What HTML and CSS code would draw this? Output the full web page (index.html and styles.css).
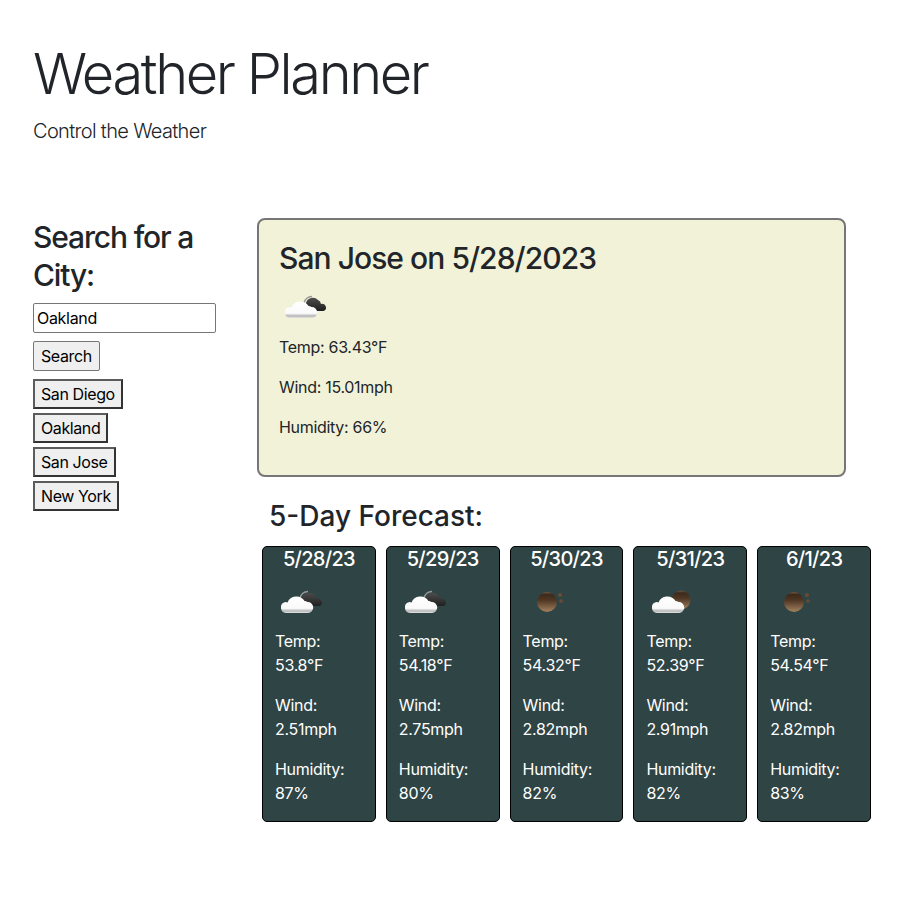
FILE: index.html
```html
<!DOCTYPE html>
<html lang="en">

<head>
    <meta charset="utf-8">
    <title>Weather Planner</title>
    <link rel="stylesheet" href="styles.css">
</head>

<body>
    <svg class="defs" width="0" height="0">
        <defs>
            <linearGradient id="cloudWhite" x1="0" y1="0" x2="0" y2="1">
                <stop offset="0" stop-color="#fff" />
                <stop offset="0.72" stop-color="#fafafa" />
                <stop offset="0.88" stop-color="#b5b5b5" />
                <stop offset="1" stop-color="#e6e6e6" />
            </linearGradient>
            <linearGradient id="cloudDark" x1="0" y1="0" x2="0" y2="1">
                <stop offset="0" stop-color="#4d4d4d" />
                <stop offset="1" stop-color="#1f1f1f" />
            </linearGradient>
            <linearGradient id="moon" x1="0" y1="0" x2="0" y2="1">
                <stop offset="0" stop-color="#7a5a40" />
                <stop offset="0.12" stop-color="#3d2a1c" />
                <stop offset="0.4" stop-color="#4e3623" />
                <stop offset="1" stop-color="#a3825f" />
            </linearGradient>
            <symbol id="clouds" viewBox="0 0 50 50">
                <path d="M23 22a8 8 0 0 1 8-6.500" fill="none" stroke="#999" stroke-width="1.500" />
                <path d="M29 30a5 5 0 0 1-4-8 7 7 0 0 1 12-3 5 5 0 0 1 3 4 3.700 3.700 0 0 1 2.500 7z" fill="url(#cloudDark)" />
                <path d="M9 37a5.500 5.500 0 0 1-.5-10.900c1 0 1.500.2 2 .4a9.500 9.500 0 0 1 17-1.500 6 6 0 0 1 3 1 5.500 5.500 0 0 1 .5 11z" fill="url(#cloudWhite)" />
            </symbol>
            <symbol id="clear" viewBox="0 0 50 50">
                <circle cx="22" cy="26" r="10" fill="url(#moon)" />
                <circle cx="35" cy="19" r="2" fill="#6a4c35" />
                <circle cx="36" cy="25" r="1.800" fill="#6a4c35" />
            </symbol>
            <symbol id="partly" viewBox="0 0 50 50">
                <circle cx="33" cy="24" r="9.500" fill="url(#moon)" />
                <path d="M9 37a5.500 5.500 0 0 1-.5-10.900c1 0 1.500.2 2 .4a9.500 9.500 0 0 1 17-1.500 6 6 0 0 1 3 1 5.500 5.500 0 0 1 .5 11z" fill="url(#cloudWhite)" />
            </symbol>
        </defs>
    </svg>

    <header class="hero">
        <h1>Weather Planner</h1>
        <p>Control the Weather</p>
    </header>

    <main class="layout">
        <aside class="sidebar">
            <h2>Search for a City:</h2>
            <input type="text" class="city-input" value="Oakland">
            <button class="search-btn">Search</button>
            <div class="history">
                <button>San Diego</button>
                <button>Oakland</button>
                <button>San Jose</button>
                <button>New York</button>
            </div>
        </aside>

        <section class="results">
            <div class="today">
                <h2>San Jose on 5/28/2023</h2>
                <svg class="icon"><use href="#clouds" /></svg>
                <p>Temp: 63.43°F</p>
                <p>Wind: 15.01mph</p>
                <p>Humidity: 66%</p>
            </div>

            <h3 class="forecast-title">5-Day Forecast:</h3>
            <div class="forecast">
                <div class="day">
                    <h4>5/28/23</h4>
                    <svg class="icon"><use href="#clouds" /></svg>
                    <p>Temp:<br>53.8°F</p>
                    <p>Wind:<br>2.51mph</p>
                    <p>Humidity:<br>87%</p>
                </div>
                <div class="day">
                    <h4>5/29/23</h4>
                    <svg class="icon"><use href="#clouds" /></svg>
                    <p>Temp:<br>54.18°F</p>
                    <p>Wind:<br>2.75mph</p>
                    <p>Humidity:<br>80%</p>
                </div>
                <div class="day">
                    <h4>5/30/23</h4>
                    <svg class="icon"><use href="#clear" /></svg>
                    <p>Temp:<br>54.32°F</p>
                    <p>Wind:<br>2.82mph</p>
                    <p>Humidity:<br>82%</p>
                </div>
                <div class="day">
                    <h4>5/31/23</h4>
                    <svg class="icon"><use href="#partly" /></svg>
                    <p>Temp:<br>52.39°F</p>
                    <p>Wind:<br>2.91mph</p>
                    <p>Humidity:<br>82%</p>
                </div>
                <div class="day">
                    <h4>6/1/23</h4>
                    <svg class="icon"><use href="#clear" /></svg>
                    <p>Temp:<br>54.54°F</p>
                    <p>Wind:<br>2.82mph</p>
                    <p>Humidity:<br>83%</p>
                </div>
            </div>
        </section>
    </main>
</body>

</html>
```

FILE: styles.css
```css
body {
    font-family: Inter, "Liberation Sans", sans-serif;
    font-size: 16px;
    line-height: 24px;
    letter-spacing: -0.3px;
    margin: 0;
    color: #212529;
    background-color: #fff;
}

.defs {
    display: block;
    height: 0;
}

h1,
h2,
h3,
h4,
p {
    margin: 0;
}

.hero {
    padding: 41px 33px 0;
    height: 177px;
    box-sizing: border-box;
}

.hero h1 {
    font-size: 56px;
    font-weight: 300;
    line-height: 67px;
    letter-spacing: -2.4px;
}

.hero p {
    font-size: 20px;
    font-weight: 300;
    line-height: 30px;
    letter-spacing: -0.66px;
    margin-top: 8px;
}

.layout {
    display: flex;
    padding: 41px 0 0 33px;
}

.sidebar {
    width: 183px;
    margin-right: 41px;
    flex-shrink: 0;
}

.sidebar h2 {
    font-size: 30px;
    font-weight: 500;
    line-height: 38px;
    letter-spacing: -1.15px;
    margin-bottom: 9px;
}

.city-input {
    display: block;
    width: 100%;
    height: 30px;
    box-sizing: border-box;
    padding: 0 3px;
    font: 16px Inter, "Liberation Sans", sans-serif;
    letter-spacing: -0.3px;
    color: #000;
    border: 1px solid #767676;
    border-radius: 2px;
}

.search-btn,
.history button {
    display: block;
    height: 30px;
    box-sizing: border-box;
    font: 16px Inter, "Liberation Sans", sans-serif;
    letter-spacing: -0.4px;
    color: #000;
    background-color: #efefef;
}

.search-btn {
    margin-top: 8px;
    padding: 0 7px;
    border: 1px solid #767676;
    border-radius: 2px;
}

.history {
    display: flex;
    flex-direction: column;
    align-items: flex-start;
    gap: 4px;
    margin-top: 8px;
}

.history button {
    padding: 0 6px;
    border: 2px solid #333;
    border-top-color: #5c5c5c;
    border-left-color: #5c5c5c;
}

.results {
    width: 614px;
}

.today {
    width: 589px;
    height: 259px;
    box-sizing: border-box;
    padding: 20px;
    background-color: #f2f2d8;
    border: 2px solid #767676;
    border-radius: 8px;
}

.today h2 {
    font-size: 30px;
    font-weight: 500;
    line-height: 36px;
    letter-spacing: -0.95px;
}

.icon {
    display: block;
    width: 50px;
    height: 50px;
}

.today .icon {
    margin: 5px 0 4px 2px;
}

.today p {
    margin-bottom: 16px;
}

.forecast-title {
    font-size: 28px;
    font-weight: 500;
    line-height: 34px;
    margin: 22px 0 13px 12px;
    letter-spacing: 0;
}

.forecast {
    display: flex;
    gap: 10px;
    margin-left: 5px;
}

.day {
    width: 114px;
    height: 276px;
    box-sizing: border-box;
    padding: 0 12px;
    color: #fff;
    background-color: #2f4445;
    border: 1px solid #000;
    border-radius: 5px;
}

.day h4 {
    font-size: 20px;
    font-weight: 500;
    line-height: 24px;
    letter-spacing: -0.7px;
    text-align: center;
}

.day .icon {
    margin: 5px 0 3px 2px;
}

.day p {
    margin-bottom: 16px;
}
```
